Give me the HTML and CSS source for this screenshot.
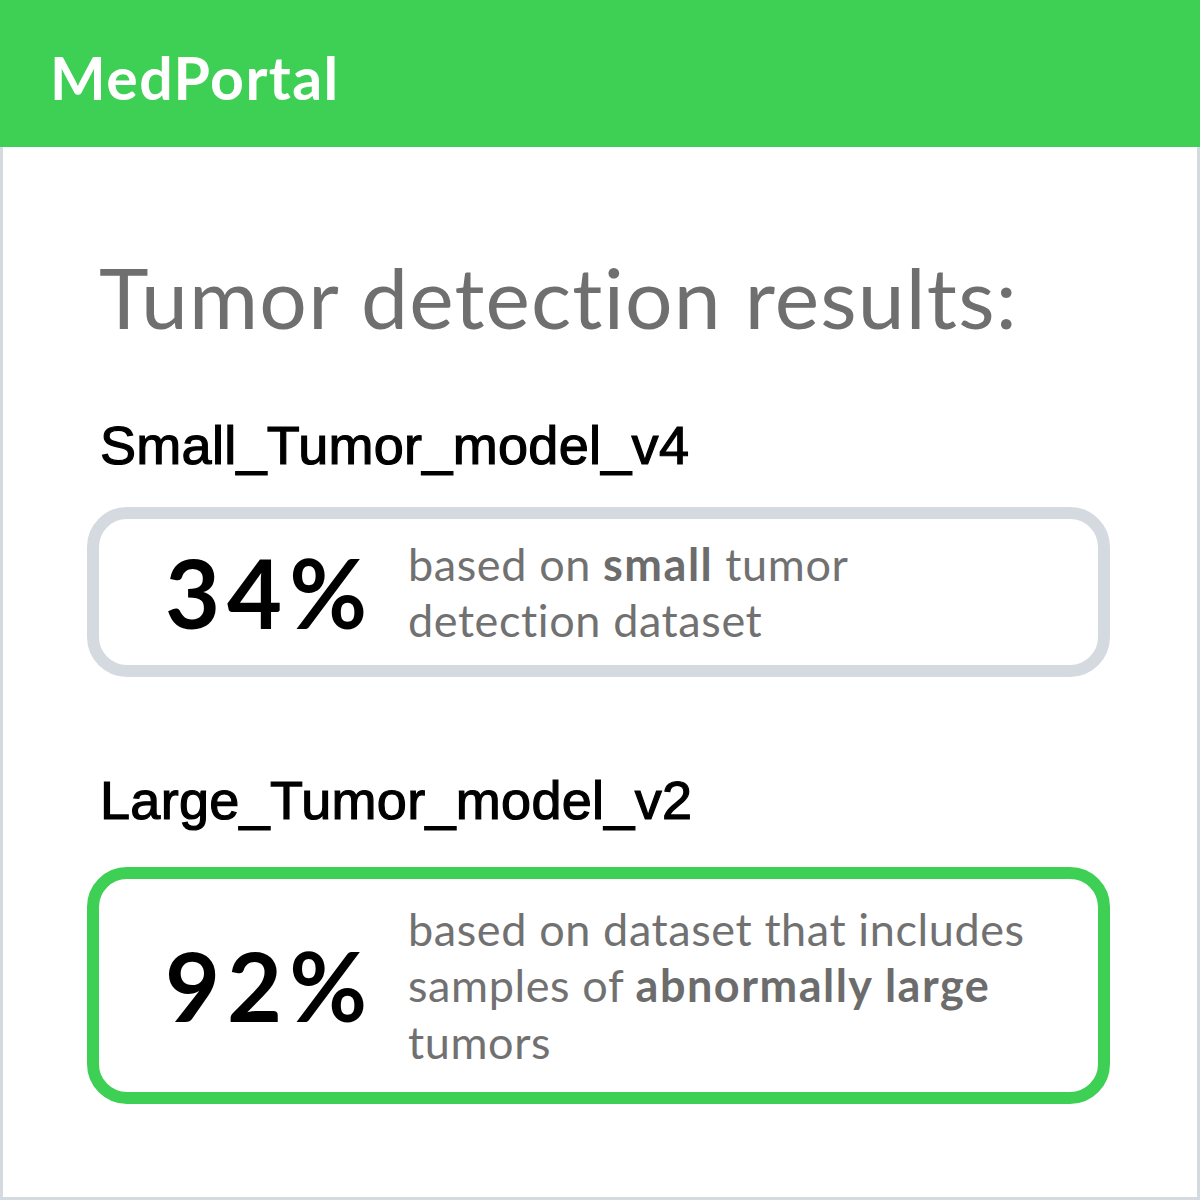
FILE: index.html
```html
<!DOCTYPE html>
<html lang="en">
<head>
<meta charset="utf-8">
<title>MedPortal</title>
<link rel="stylesheet" href="styles.css">
</head>
<body>
<header class="topbar">
  <div class="brand">MedPortal</div>
</header>
<main class="content">
  <h1 class="title">Tumor detection results:</h1>
  <h2 class="model model-first">Small_Tumor_model_v4</h2>
  <div class="result result-neutral">
    <div class="score">34%</div>
    <p class="desc">based on <b>small</b> tumor<br>detection dataset</p>
  </div>
  <h2 class="model model-second">Large_Tumor_model_v2</h2>
  <div class="result result-good">
    <div class="score">92%</div>
    <p class="desc">based on dataset that includes samples of <b>abnormally large</b> tumors</p>
  </div>
</main>
</body>
</html>
```
FILE: styles.css
```css
* { box-sizing: border-box; }
html, body { margin: 0; padding: 0; background: #ffffff; }
body {
  width: 1200px;
  height: 1200px;
  display: flex;
  flex-direction: column;
  font-family: "Lato", "Noto Sans", sans-serif;
  font-variant-ligatures: none;
}
.topbar {
  height: 147px;
  background: #3ecf55;
  padding-left: 50px;
  display: flex;
  align-items: flex-start;
}
.brand {
  color: #ffffff;
  font-weight: 700;
  font-size: 59px;
  line-height: 59px;
  letter-spacing: 1.4px;
  margin-top: 48px;
}
.content {
  flex: 1;
  border: 3px solid #d5dae0;
  border-top: none;
  padding: 0 87px 0 84px;
}
.title {
  margin: 108px 0 0 12px;
  font-weight: 400;
  font-size: 84px;
  line-height: 84px;
  letter-spacing: 1.2px;
  color: #6f6f6f;
}
.model {
  margin: 0 0 0 13px;
  font-family: "Liberation Sans", Arial, sans-serif;
  font-weight: 400;
  font-size: 54px;
  line-height: 54px;
  letter-spacing: 0.3px;
  color: #000000;
  -webkit-text-stroke: 1.2px #000000;
}
.model-first { margin-top: 79px; }
.model-second { margin-top: 96px; }
.result {
  border: 12px solid #d5dae0;
  border-radius: 40px;
  display: flex;
  align-items: center;
  padding: 0 30px 0 66px;
}
.model-first + .result { margin-top: 35px; height: 170px; }
.model-second + .result { margin-top: 40px; height: 237px; }
.result-good { border-color: #3ecf55; }
.score {
  flex: none;
  width: 243px;
  font-weight: 700;
  font-size: 95px;
  line-height: 95px;
  letter-spacing: 7px;
  color: #000000;
}
.desc {
  margin: 0;
  max-width: 640px;
  font-size: 45px;
  line-height: 56.5px;
  letter-spacing: 0.6px;
  color: #717171;
}
.desc b { font-weight: 700; letter-spacing: 1.5px; color: #6c6c6c; }
```
